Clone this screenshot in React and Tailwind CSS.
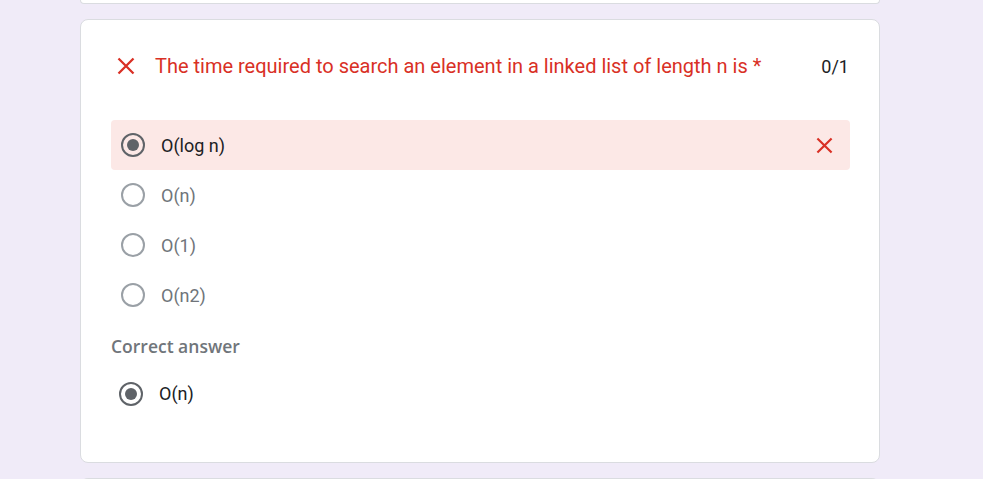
import { useState } from "react";

const options = ["O(log n)", "O(n)", "O(1)", "O(n2)"];

const CrossIcon = ({ className = "" }) => (
  <svg viewBox="0 0 18 18" className={className} fill="none" stroke="currentColor" strokeWidth="2.3">
    <path d="M1.5 1.5 16.5 16.5M16.5 1.5 1.5 16.5" />
  </svg>
);

const Radio = ({ checked }) => (
  <span
    className={`flex items-center justify-center w-[24px] h-[24px] rounded-full border-2 shrink-0 ${
      checked ? "border-[#5f6368]" : "border-[#9aa0a6]"
    }`}
  >
    {checked && <span className="w-[12px] h-[12px] rounded-full bg-[#5f6368]" />}
  </span>
);

const App = () => {
  const [selected] = useState("O(log n)");

  return (
    <div
      className="w-[983px] h-[479px] overflow-hidden bg-[#f0ebf8] flex flex-col pl-[80px]"
      style={{ fontFamily: "Roboto, 'Liberation Sans', sans-serif" }}
    >
      {/* previous card edge */}
      <div className="w-[800px] h-[4px] bg-white border-x border-b border-[#dadce0] rounded-b-lg shrink-0" />

      {/* Question card */}
      <div className="mt-[15px] w-[800px] h-[444px] bg-white border border-[#dadce0] rounded-lg pt-[34px] pl-[30px] pr-[29px] shrink-0">
        <div className="flex items-center h-6">
          <CrossIcon className="w-[18px] h-[18px] ml-[6px] text-[#d93025]" />
          <span className="ml-[20px] text-[20px] text-[#d93025]">
            The time required to search an element in a linked list of length n is *
          </span>
          <span className="ml-auto mr-[1px] text-[18px] text-[#202124]">0/1</span>
        </div>

        <div className="mt-[42px] flex flex-col">
          {options.map((opt) => {
            const isSel = opt === selected;
            return (
              <div
                key={opt}
                className={`flex items-center h-[50px] pl-[10px] pr-[17px] rounded ${
                  isSel ? "bg-[#fce8e6]" : ""
                }`}
              >
                <Radio checked={isSel} />
                <span
                  className={`ml-[16px] text-[18px] ${
                    isSel ? "text-[#202124]" : "text-[#70757a]"
                  }`}
                >
                  {opt}
                </span>
                {isSel && <CrossIcon className="w-[17px] h-[17px] ml-auto text-[#d93025]" />}
              </div>
            );
          })}
        </div>

        <div
          className="mt-[13px] text-[17.5px] font-semibold text-[#70757a]"
          style={{ fontFamily: "'Open Sans', Roboto, sans-serif" }}
        >
          Correct answer
        </div>

        <div className="mt-[21px] flex items-center pl-[8px]">
          <Radio checked />
          <span className="ml-[16px] text-[18px] text-[#202124]">O(n)</span>
        </div>
      </div>

      {/* next card edge */}
      <div className="mt-[15px] w-[800px] h-[10px] bg-white border-x border-t border-[#dadce0] rounded-t-lg shrink-0" />
    </div>
  );
};

export default App;
